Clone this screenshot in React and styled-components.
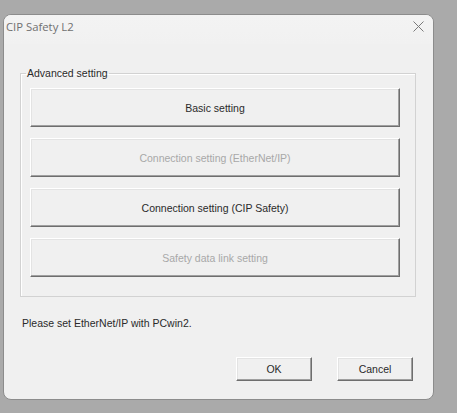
import React from 'react';
import styled, { createGlobalStyle } from 'styled-components';

const Global = createGlobalStyle`
  html, body {
    margin:0;
    padding:0;
    background:#aaaaaa;
  }
  body{
    width:457px;
    height:413px;
    overflow:hidden;
  }
`;

const Dialog = styled.div`
  box-sizing:border-box;
  margin:14px 0 0 3px;
  width:431px;
  height:386px;
  background:#f0f0f0;
  border:1px solid #8c8c8c;
  border-radius:8px;
  overflow:hidden;
  display:flex;
  flex-direction:column;
  font-family:"Liberation Sans", Arial, sans-serif;
  font-size:10.5px;
  color:#2a2a2a;
`;

const TitleBar = styled.div`
  height:29px;
  display:flex;
  align-items:center;
  justify-content:space-between;
  padding:0 9px 0 2px;
  background:linear-gradient(#f3f3f3, #f1f1f1);
`;

const Title = styled.span`
  font-family:"Open Sans", "Noto Sans", sans-serif;
  font-size:11.3px;
  color:#707070;
  margin-top:-6px;
`;

const Close = styled.span`
  display:flex;
  margin-top:-7px;
`;

const Body = styled.div`
  flex:1;
  display:flex;
  flex-direction:column;
  padding:0 17px 0 16px;
`;

const Group = styled.fieldset`
  margin:23px 0 0 0;
  padding:9px 15px 19px 9px;
  border:1px solid #d2d2d2;
  box-shadow:inset 1px 1px 0 #ffffff;
  display:flex;
  flex-direction:column;
  gap:11px;
  height:230px;
  box-sizing:border-box;
`;

const Legend = styled.legend`
  padding:0 1px;
  margin-left:-4px;
  font-size:10.5px;
  line-height:12px;
  color:#2a2a2a;
`;

const Button = styled.button`
  box-sizing:border-box;
  width:${(p) => p.$w || '100%'};
  height:${(p) => p.$h || '39px'};
  flex-shrink:0;
  background:#f0f0f0;
  border:none;
  border-top:1px solid #ffffff;
  border-left:1px solid #ffffff;
  border-right:1px solid #6e6e6e;
  border-bottom:1px solid #6e6e6e;
  box-shadow:inset -1px -1px 0 #a0a0a0, inset 1px 1px 0 #e3e3e3;
  font-family:"Liberation Sans", Arial, sans-serif;
  font-size:10.5px;
  color:${(p) => (p.disabled ? '#a8a8a8' : '#2a2a2a')};
  padding:0;
`;

const Note = styled.p`
  margin:20px 0 0 2px;
  line-height:13px;
`;

const Actions = styled.div`
  display:flex;
  justify-content:flex-end;
  gap:25px;
  margin-top:27px;
  padding-right:3px;
`;

const CloseIcon = () => (
  <svg width="11" height="11" viewBox="0 0 11 11">
    <path d="M0.5 0.5 L10.5 10.5 M10.5 0.5 L0.5 10.5" stroke="#7a7a7a" strokeWidth="1" fill="none" />
  </svg>
);

const settings = [
  { label: 'Basic setting' },
  { label: 'Connection setting (EtherNet/IP)', disabled: true },
  { label: 'Connection setting (CIP Safety)' },
  { label: 'Safety data link setting', disabled: true },
];

export default function App() {
  return (
    <>
      <Global />
      <Dialog>
        <TitleBar>
          <Title>CIP Safety L2</Title>
          <Close>
            <CloseIcon />
          </Close>
        </TitleBar>
        <Body>
          <Group>
            <Legend>Advanced setting</Legend>
            {settings.map((s) => (
              <Button key={s.label} disabled={s.disabled}>
                {s.label}
              </Button>
            ))}
          </Group>
          <Note>Please set EtherNet/IP with PCwin2.</Note>
          <Actions>
            <Button $w="76px" $h="24px">OK</Button>
            <Button $w="76px" $h="24px">Cancel</Button>
          </Actions>
        </Body>
      </Dialog>
    </>
  );
}
